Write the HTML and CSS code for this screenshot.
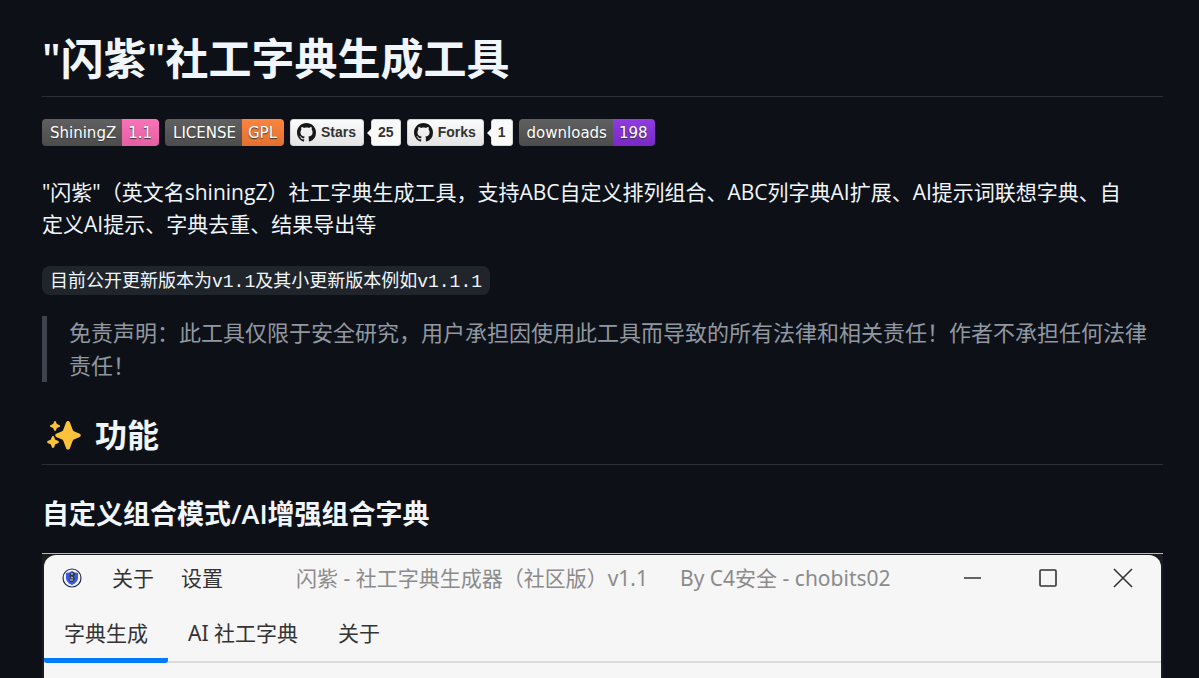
FILE: index.html
```html
<!DOCTYPE html>
<html lang="zh-CN">
<head>
    <meta charset="UTF-8">
    <meta name="viewport" content="width=device-width, initial-scale=1.0">
    <title>"闪紫"社工字典生成工具</title>
    <link rel="stylesheet" href="styles.css">
</head>
<body>
<main class="readme">
	<h1>"闪紫"社工字典生成工具</h1>
	<!-- 徽章 -->
	<div class="badges">
		<a class="badge" href="#"><span class="label">ShiningZ</span><span class="value pink">1.1</span></a>
		<a class="badge" href="#"><span class="label">LICENSE</span><span class="value orange">GPL</span></a>
		<div class="social">
			<a class="action" href="#">
				<svg class="mark" viewBox="0 0 16 16"><path d="M8 0C3.58 0 0 3.58 0 8c0 3.54 2.29 6.53 5.47 7.59.4.07.55-.17.55-.38 0-.19-.01-.82-.01-1.49-2.01.37-2.53-.49-2.69-.94-.09-.23-.48-.94-.82-1.13-.28-.15-.68-.52-.01-.53.63-.01 1.08.58 1.23.82.72 1.21 1.87.87 2.33.66.07-.52.28-.87.51-1.07-1.78-.2-3.64-.89-3.64-3.95 0-.87.31-1.59.82-2.15-.08-.2-.36-1.02.08-2.12 0 0 .67-.21 2.2.82.64-.18 1.32-.27 2-.27s1.36.09 2 .27c1.53-1.04 2.2-.82 2.2-.82.44 1.1.16 1.92.08 2.12.51.56.82 1.27.82 2.15 0 3.07-1.87 3.75-3.65 3.95.29.25.54.73.54 1.48 0 1.07-.01 1.93-.01 2.2 0 .21.15.46.55.38A8.01 8.01 0 0 0 16 8c0-4.42-3.58-8-8-8z"/></svg>
				<span>Stars</span>
			</a>
			<a class="count" href="#">25</a>
		</div>
		<div class="social">
			<a class="action" href="#">
				<svg class="mark" viewBox="0 0 16 16"><path d="M8 0C3.58 0 0 3.58 0 8c0 3.54 2.29 6.53 5.47 7.59.4.07.55-.17.55-.38 0-.19-.01-.82-.01-1.49-2.01.37-2.53-.49-2.69-.94-.09-.23-.48-.94-.82-1.13-.28-.15-.68-.52-.01-.53.63-.01 1.08.58 1.23.82.72 1.21 1.87.87 2.33.66.07-.52.28-.87.51-1.07-1.78-.2-3.64-.89-3.64-3.95 0-.87.31-1.59.82-2.15-.08-.2-.36-1.02.08-2.12 0 0 .67-.21 2.2.82.64-.18 1.32-.27 2-.27s1.36.09 2 .27c1.53-1.04 2.2-.82 2.2-.82.44 1.1.16 1.92.08 2.12.51.56.82 1.27.82 2.15 0 3.07-1.87 3.75-3.65 3.95.29.25.54.73.54 1.48 0 1.07-.01 1.93-.01 2.2 0 .21.15.46.55.38A8.01 8.01 0 0 0 16 8c0-4.42-3.58-8-8-8z"/></svg>
				<span>Forks</span>
			</a>
			<a class="count" href="#">1</a>
		</div>
		<a class="badge" href="#"><span class="label">downloads</span><span class="value purple">198</span></a>
	</div>
	<p class="intro">"闪紫"（英文名shiningZ）社工字典生成工具，支持ABC自定义排列组合、ABC列字典AI扩展、AI提示词联想字典、自定义AI提示、字典去重、结果导出等</p>
	<p><code>目前公开更新版本为v1.1及其小更新版本例如v1.1.1</code></p>
	<blockquote>免责声明：此工具仅限于安全研究，用户承担因使用此工具而导致的所有法律和相关责任！作者不承担任何法律责任！</blockquote>
	<h2>
		<svg class="sparkles" viewBox="0 0 34 30">
			<path d="M21 1c1 0 1.600.6 2 1.600l2.600 7c.4 1 .8 1.400 1.800 1.800l4.800 2c1 .4 1.600 1 1.600 1.900s-.6 1.500-1.600 1.900l-4.800 2c-1 .4-1.400.8-1.800 1.800l-2.600 7c-.4 1-1 1.600-2 1.600s-1.600-.6-2-1.600l-2.600-7c-.4-1-.8-1.400-1.800-1.800l-4.800-2c-1-.4-1.600-1-1.600-1.900s.6-1.500 1.600-1.900l4.800-2c1-.4 1.400-.8 1.800-1.800l2.600-7c.4-1 1-1.600 2-1.600z"/>
			<path d="M8 1c.6 0 .8.400 1 .9l.9 2.200 2.200.9c.5.2.9.4.9 1s-.4.8-.9 1l-2.200.9-.9 2.200c-.2.5-.4.9-1 .9s-.8-.4-1-.9l-.9-2.200-2.200-.9c-.5-.2-.9-.4-.9-1s.4-.8.900-1l2.200-.9.9-2.200c.2-.5.4-.9 1-.9z"/>
			<path d="M6 16c.6 0 1 .4 1.200 1l1.100 2.700 2.600 1.100c.6.2 1 .6 1 1.200s-.4 1-1 1.200l-2.600 1.100-1.100 2.700c-.2.6-.6 1-1.200 1s-1-.4-1.200-1l-1.100-2.700-2.600-1.100c-.6-.2-1-.6-1-1.200s.4-1 1-1.200l2.600-1.100 1.100-2.700c.2-.6.6-1 1.200-1z"/>
		</svg>
		<span>功能</span>
	</h2>
	<h3>自定义组合模式/AI增强组合字典</h3>
	<!-- 软件界面 -->
	<div class="shot">
		<div class="window">
			<header class="titlebar">
				<svg class="logo" viewBox="0 0 20 20">
					<circle cx="10" cy="10" r="9" fill="#f3f4fb" stroke="#252a48" stroke-width="1.200"/>
					<path d="M4 5c2 0 4-1 6-2 2 1 4 2 6 2v5c0 3-3 6-6 7-3-1-6-4-6-7z" fill="#3d5bd9"/>
					<path d="M8 6l3-2 2 2-1 3 1 2-2 3H8l-1-2 2-2-2-2z" fill="#343744"/>
					<path d="M9 6h2M9 9l2 1M8 12h3" stroke="#dfe2ee" fill="none"/>
				</svg>
				<nav class="menu">
					<button type="button">关于</button>
					<button type="button">设置</button>
				</nav>
				<div class="caption">
					<span>闪紫 - 社工字典生成器（社区版）v1.1</span>
					<span>By C4安全 - chobits02</span>
				</div>
				<div class="controls">
					<button type="button" aria-label="最小化"><svg viewBox="0 0 20 20"><path d="M1 10h17"/></svg></button>
					<button type="button" aria-label="最大化"><svg viewBox="0 0 20 20"><rect x="2" y="2" width="16" height="16" rx="1"/></svg></button>
					<button type="button" aria-label="关闭"><svg viewBox="0 0 20 20"><path d="M1 1l18 18M19 1L1 19"/></svg></button>
				</div>
			</header>
			<nav class="tabs">
				<button type="button" class="active">字典生成</button>
				<button type="button">AI 社工字典</button>
				<button type="button">关于</button>
			</nav>
		</div>
	</div>
</main>
</body>
</html>
```

FILE: styles.css
```css
*{box-sizing: border-box;}
body{display: flex; flex-direction: column; margin: 0; min-height: 100vh; background: #0d1117; color: #f0f6fc; font-family: "Open Sans", "Noto Sans CJK SC", sans-serif; font-size: 22px; line-height: 32px;}
a{color: inherit; text-decoration: none;}
button{border: 0; padding: 0; background: none; font: inherit; color: inherit;}
.readme{flex: 1; display: flex; flex-direction: column; padding: 32px 36px 0 42px;}
h1, h2, h3, p, blockquote{margin: 0;}
h1, h2, h3{font-weight: 600;}
h1{margin-bottom: 22px; padding-bottom: 10px; border-bottom: 1px solid #2b3038; font-size: 43px; line-height: 54px;}
h2{display: flex; align-items: center; gap: 14px; margin: 32px 0; padding: 0 0 8px 5px; border-bottom: 1px solid #2b3038; font-size: 32px; line-height: 42px;}
h3{margin-bottom: 22px; font-size: 27px; line-height: 34px;}
p{margin-bottom: 18px;}
.intro{margin-bottom: 26px; padding-right: 32px; font-size: 21px;}
p code{display: inline-block; padding: 3px 8px 0; border-radius: 8px; background: #20252c; font-family: "Liberation Mono", "Noto Sans CJK SC", monospace; font-size: 18px; line-height: 26px; vertical-align: top;}
blockquote{padding-left: 22px; border-left: 5px solid #3d444d; color: #9198a1; line-height: 33px;}

/* 徽章 */
.badges{display: flex; gap: 6px; margin-bottom: 30px; font: 15px/25px "DejaVu Sans", Verdana, sans-serif;}
.badge{display: flex; border-radius: 4px; overflow: hidden; color: #fff; text-shadow: 0 1px 1px #333;}
.label{padding: 2px 6px 0 8px; background: linear-gradient(#606060, #4c4c4c);}
.value{padding: 2px 7px 0 6px;}
.pink{background: linear-gradient(#fb72b9, #e35fa2);}
.orange{background: linear-gradient(#fb853f, #e3702d);}
.purple{background: linear-gradient(#8f3be0, #7928c6);}
.social{display: flex; gap: 7px; color: #333; font-family: "Liberation Sans", Arial, sans-serif; font-size: 14px; font-weight: 700;}
.action, .count{border: 1px solid #d5d5d5; border-radius: 3px;}
.action{display: flex; align-items: center; gap: 5px; padding: 0 7px 0 6px; background: linear-gradient(#fcfcfc, #e4e4e4);}
.mark{width: 19px; height: 19px; fill: #181717;}
.count{position: relative; padding: 0 6px; background: #fafafa;}
.count::before{content: ""; position: absolute; left: -5px; top: 8px; border: 5px solid transparent; border-left: 0; border-right-color: #fafafa;}
.sparkles{width: 34px; height: 30px; fill: #fcc23c;}

/* 软件窗口 */
.shot{flex: 1; display: flex; padding: 1px 2px 0; border-top: 1px solid #b8b8b8; background: #1c1c1e;}
.window{flex: 1; border-radius: 12px 12px 0 0; overflow: hidden; background: #f6f6f6; color: #333; font-size: 21px; font-family: "Noto Sans", "Noto Sans CJK SC", sans-serif;}
.titlebar{display: flex; align-items: center; height: 46px; padding: 0 28px 0 18px;}
.logo{width: 20px; height: 20px;}
.menu{display: flex; gap: 27px; margin-left: 30px;}
.caption{display: flex; gap: 32px; margin-left: 73px; color: #8b8b8b;}
.controls{display: flex; gap: 55px; margin-left: auto;}
.controls svg{display: block; width: 20px; height: 20px; fill: none; stroke: #333; stroke-width: 1.6;}
.tabs{display: flex; height: 62px; border-bottom: 2px solid #dcdcdc;}
.tabs button{height: 62px; padding: 6px 20px 0; border-bottom: 5px solid transparent;}
.tabs .active{border-color: #007bff; border-radius: 3px;}
```
